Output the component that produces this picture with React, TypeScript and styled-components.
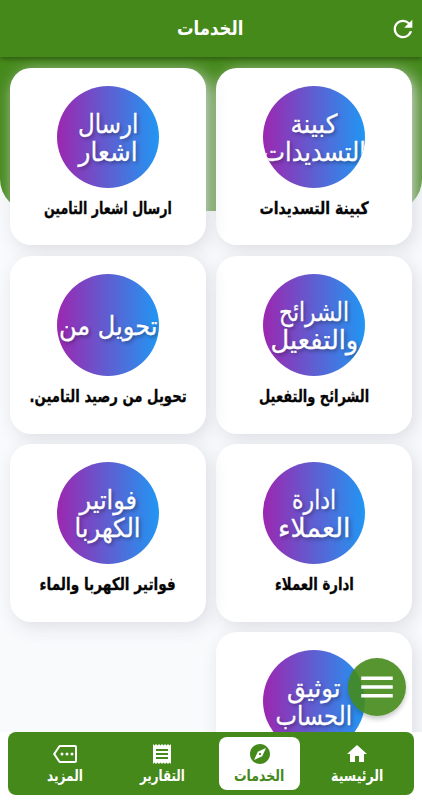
import React, { useLayoutEffect, useRef, useState } from "react";
import styled, { createGlobalStyle } from "styled-components";
import { MdRefresh, MdHome, MdExplore, MdReceipt, MdOutlineMore, MdMenu } from "react-icons/md";

const GREEN = "#45891b";

const Global = createGlobalStyle`
  * { box-sizing: border-box; }
  body { margin: 0; overflow: hidden; }
`;

const Screen = styled.div`
  width: 422px;
  height: 800px;
  display: flex;
  flex-direction: column;
  overflow: hidden;
  background: #fff;
  font-family: "DejaVu Sans", "Noto Sans", sans-serif;
`;

const Header = styled.header`
  flex: none;
  height: 57px;
  display: grid;
  grid-template-columns: 38px 1fr 37px;
  align-items: center;
  background: ${GREEN};
  color: #fff;
  box-shadow: 0 2px 5px rgba(0, 0, 0, 0.35);
  z-index: 2;
`;

const Title = styled.h1`
  margin: 0;
  display: flex;
  justify-content: center;
  font-size: 19.5px;
  font-weight: 700;
  line-height: 26px;
`;

const IconButton = styled.button`
  padding: 0;
  border: 0;
  background: none;
  color: #fff;
  display: flex;
  justify-content: center;
  font-size: 28px;
`;

const Content = styled.main`
  position: relative;
  flex: none;
  height: 675px;
  overflow: hidden;
  background: #f8fafc;
`;

const Backdrop = styled.div`
  position: absolute;
  inset: 0 0 auto;
  height: 154px;
  border-radius: 0 0 32px 32px;
  background: ${GREEN};
`;

const Grid = styled.div`
  position: relative;
  display: grid;
  grid-template-columns: repeat(2, minmax(0, 1fr));
  grid-auto-rows: 177.8px;
  gap: 10.4px;
  padding: 10.7px 10px;
`;

const Card = styled.section`
  display: flex;
  flex-direction: column;
  align-items: center;
  padding-top: 18px;
  border-radius: 21px;
  background: #fff;
  box-shadow: 4px 5px 17px rgba(220, 221, 228, 0.95);
`;

const Disc = styled.div`
  width: 102px;
  height: 102px;
  flex: none;
  display: flex;
  flex-direction: column;
  align-items: center;
  justify-content: center;
  padding-top: 2px;
  border-radius: 50%;
  overflow: hidden;
  background: linear-gradient(90deg, #9c27b0, #2196f3);
  color: #fff;
  font-size: 26px;
  line-height: 28px;
  -webkit-text-stroke: 0.3px #fff;
  text-shadow: 2px 2px 4px rgba(0, 0, 0, 0.35);
`;

const CardLabel = styled.div`
  margin-top: 7px;
  font-size: 17px;
  font-weight: 700;
  line-height: 26px;
  color: #050505;
  -webkit-text-stroke: 0.3px #050505;
`;

const Fab = styled.button`
  position: absolute;
  left: 348px;
  top: 601px;
  width: 58px;
  height: 58px;
  padding: 0;
  border: 0;
  border-radius: 50%;
  display: flex;
  align-items: center;
  justify-content: center;
  background: rgba(69, 137, 27, 0.9);
  color: #fff;
  font-size: 42px;
  box-shadow: 0 3px 5px rgba(0, 0, 0, 0.22);
`;

const NavBar = styled.nav`
  flex: none;
  width: 405.5px;
  height: 63px;
  margin-right: 8.5px;
  padding: 5px 16px;
  display: flex;
  align-items: stretch;
  justify-content: space-between;
  border-radius: 8px;
  background: ${GREEN};
`;

const Tab = styled.a<{ $active?: boolean }>`
  width: 81px;
  padding-top: 4.5px;
  display: flex;
  flex-direction: column;
  align-items: center;
  border-radius: 8px;
  background: ${(p) => (p.$active ? "#fff" : "transparent")};
  color: ${(p) => (p.$active ? GREEN : "#fff")};
  font-size: 15.5px;
  font-weight: 700;
  line-height: 20px;
  svg { font-size: 24px; flex: none; }
`;

const Line = styled.span`
  display: block;
  width: max-content;
  white-space: nowrap;
  transform-origin: center;
`;

const LineSlot = styled.span`
  display: flex;
  justify-content: center;
  width: 0;
`;

/* Condenses or widens a single line, centred on its slot, so it fills the given width. */
function FitText({ text, width }: { text: string; width: number }) {
  const ref = useRef<HTMLSpanElement>(null);
  const [scale, setScale] = useState(1);
  useLayoutEffect(() => {
    if (ref.current) setScale(width / ref.current.offsetWidth);
  }, [text, width]);
  return (
    <LineSlot>
      <Line ref={ref} style={{ transform: `scaleX(${scale})` }}>
        {text}
      </Line>
    </LineSlot>
  );
}

type Fit = [string, number];

const services: { lines: Fit[]; label?: Fit }[] = [
  { lines: [["كبينة", 47], ["التسديدات", 103]], label: ["كبينة التسديدات", 109] },
  { lines: [["ارسال", 60], ["اشعار", 59]], label: ["ارسال اشعار التامين", 128] },
  { lines: [["الشرائح", 70], ["والتفعيل", 88]], label: ["الشرائح والتفعيل", 110] },
  { lines: [["تحويل من", 98]], label: ["تحويل من رصيد التامين.", 157] },
  { lines: [["ادارة", 44], ["العملاء", 72]], label: ["ادارة العملاء", 79] },
  { lines: [["فواتير", 58], ["الكهربا", 66]], label: ["فواتير الكهربا والماء", 136] },
  { lines: [["توثيق", 53], ["الحساب", 77]] },
];

const tabs = [
  { text: "الرئيسية", width: 52, Icon: MdHome },
  { text: "الخدمات", width: 50, Icon: MdExplore, active: true },
  { text: "التقارير", width: 45, Icon: MdReceipt },
  { text: "المزيد", width: 36, Icon: MdOutlineMore },
];

export default function App() {
  return (
    <Screen dir="rtl">
      <Global />
      <Header>
        <IconButton aria-label="تحديث">
          <MdRefresh />
        </IconButton>
        <Title>
          <FitText text="الخدمات" width={66} />
        </Title>
      </Header>
      <Content>
        <Backdrop />
        <Grid>
          {services.map((s) => (
            <Card key={s.lines[0][0]}>
              <Disc>
                {s.lines.map(([t, w]) => (
                  <FitText key={t} text={t} width={w} />
                ))}
              </Disc>
              {s.label && (
                <CardLabel>
                  <FitText text={s.label[0]} width={s.label[1]} />
                </CardLabel>
              )}
            </Card>
          ))}
        </Grid>
        <Fab aria-label="القائمة">
          <MdMenu />
        </Fab>
      </Content>
      <NavBar>
        {tabs.map(({ text, width, Icon, active }) => (
          <Tab key={text} $active={active}>
            <Icon />
            <FitText text={text} width={width} />
          </Tab>
        ))}
      </NavBar>
    </Screen>
  );
}
